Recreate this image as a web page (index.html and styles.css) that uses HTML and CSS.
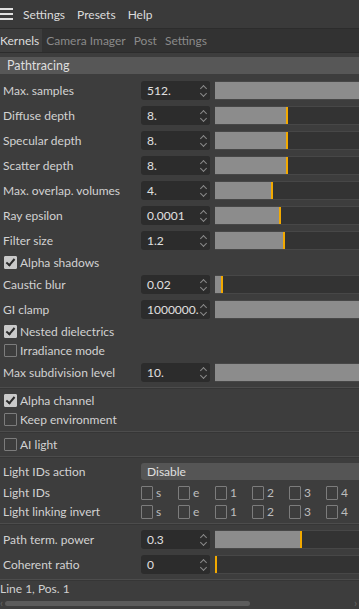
FILE: index.html
```html
<!DOCTYPE html>
<html lang="en">
<head>
    <meta charset="UTF-8">
    <meta name="viewport" content="width=device-width, initial-scale=1.0">
    <title>Render Settings</title>
    <link rel="stylesheet" href="styles.css">
</head>
<body>

    <div class="menubar">
        <span class="burger"><i></i><i></i><i></i></span>
        <span class="menu-item">Settings</span>
        <span class="menu-item">Presets</span>
        <span class="menu-item">Help</span>
    </div>

    <div class="tabs">
        <span class="tab active">Kernels</span>
        <span class="tab">Camera Imager</span>
        <span class="tab">Post</span>
        <span class="tab">Settings</span>
    </div>

    <div class="section-head">Pathtracing</div>

    <div class="panel">
        <div class="row slider-row">
            <span class="label">Max. samples</span>
            <span class="field">512.<span class="spin"></span></span>
            <span class="slider"><span class="fill full" style="width: 100%"></span></span>
        </div>
        <div class="row slider-row">
            <span class="label">Diffuse depth</span>
            <span class="field">8.<span class="spin"></span></span>
            <span class="slider"><span class="fill" style="width: 71px"></span></span>
        </div>
        <div class="row slider-row">
            <span class="label">Specular depth</span>
            <span class="field">8.<span class="spin"></span></span>
            <span class="slider"><span class="fill" style="width: 71px"></span></span>
        </div>
        <div class="row slider-row">
            <span class="label">Scatter depth</span>
            <span class="field">8.<span class="spin"></span></span>
            <span class="slider"><span class="fill" style="width: 71px"></span></span>
        </div>
        <div class="row slider-row">
            <span class="label">Max. overlap. volumes</span>
            <span class="field">4.<span class="spin"></span></span>
            <span class="slider"><span class="fill" style="width: 56px"></span></span>
        </div>
        <div class="row slider-row">
            <span class="label">Ray epsilon</span>
            <span class="field">0.0001<span class="spin"></span></span>
            <span class="slider"><span class="fill" style="width: 64px"></span></span>
        </div>
        <div class="row slider-row">
            <span class="label">Filter size</span>
            <span class="field">1.2<span class="spin"></span></span>
            <span class="slider"><span class="fill" style="width: 68px"></span></span>
        </div>
        <div class="row check-row">
            <span class="box checked"></span><span class="check-label">Alpha shadows</span>
        </div>
        <div class="row slider-row">
            <span class="label">Caustic blur</span>
            <span class="field">0.02<span class="spin"></span></span>
            <span class="slider"><span class="fill" style="width: 6px"></span></span>
        </div>
        <div class="row slider-row">
            <span class="label">GI clamp</span>
            <span class="field">1000000.<span class="spin"></span></span>
            <span class="slider"><span class="fill full" style="width: 100%"></span></span>
        </div>
        <div class="row check-row">
            <span class="box checked"></span><span class="check-label">Nested dielectrics</span>
        </div>
        <div class="row check-row">
            <span class="box"></span><span class="check-label">Irradiance mode</span>
        </div>
        <div class="row slider-row">
            <span class="label">Max subdivision level</span>
            <span class="field">10.<span class="spin"></span></span>
            <span class="slider"><span class="fill full" style="width: 100%"></span></span>
        </div>

        <div class="sep"></div>

        <div class="row check-row">
            <span class="box checked"></span><span class="check-label">Alpha channel</span>
        </div>
        <div class="row check-row">
            <span class="box"></span><span class="check-label">Keep environment</span>
        </div>

        <div class="sep"></div>

        <div class="row check-row">
            <span class="box"></span><span class="check-label">AI light</span>
        </div>

        <div class="sep"></div>

        <div class="row drop-row">
            <span class="label">Light IDs action</span>
            <span class="dropdown">Disable</span>
        </div>
        <div class="row id-row">
            <span class="label">Light IDs</span>
            <span class="ids">
                <span class="id"><span class="box"></span>s</span>
                <span class="id"><span class="box"></span>e</span>
                <span class="id"><span class="box"></span>1</span>
                <span class="id"><span class="box"></span>2</span>
                <span class="id"><span class="box"></span>3</span>
                <span class="id"><span class="box"></span>4</span>
            </span>
        </div>
        <div class="row id-row">
            <span class="label">Light linking invert</span>
            <span class="ids">
                <span class="id"><span class="box"></span>s</span>
                <span class="id"><span class="box"></span>e</span>
                <span class="id"><span class="box"></span>1</span>
                <span class="id"><span class="box"></span>2</span>
                <span class="id"><span class="box"></span>3</span>
                <span class="id"><span class="box"></span>4</span>
            </span>
        </div>

        <div class="sep"></div>

        <div class="row slider-row">
            <span class="label">Path term. power</span>
            <span class="field">0.3<span class="spin"></span></span>
            <span class="slider"><span class="fill" style="width: 85px"></span></span>
        </div>
        <div class="row slider-row">
            <span class="label">Coherent ratio</span>
            <span class="field">0<span class="spin"></span></span>
            <span class="slider"><span class="fill" style="width: 0px"></span></span>
        </div>

        <div class="sep"></div>
    </div>

    <div class="status">Line 1, Pos. 1</div>
    <div class="hscroll">
        <span class="arrow">&lsaquo;</span>
        <span class="track"><span class="thumb"></span></span>
        <span class="arrow">&rsaquo;</span>
    </div>

</body>
</html>
```

FILE: styles.css
```css
body {
    margin: 0;
    width: 359px;
    height: 609px;
    overflow: hidden;
    background-color: #3d3d3d;
    color: #d2d2d2;
    font-family: Lato, "Noto Sans", sans-serif;
    font-size: 12px;
}

.menubar {
    height: 28px;
    display: flex;
    align-items: center;
    background-color: #3a3a3a;
    color: #dcdcdc;
    font-size: 12px;
}
.burger {
    width: 13px;
    display: flex;
    flex-direction: column;
    gap: 3px;
    margin-right: 10px;
}
.burger i {
    display: block;
    height: 2px;
    background: #e0e0e0;
}
.menu-item {
    margin-right: 12px;
}

.tabs {
    height: 23px;
    display: flex;
    align-items: stretch;
    background-color: #323232;
    border-top: 1px solid #2c2c2c;
    border-bottom: 1px solid #2c2c2c;
    font-size: 12px;
}
.tab {
    display: flex;
    align-items: center;
    padding: 0 4px;
    color: #8a8a8a;
}
.tab.active {
    padding-left: 0;
    padding-right: 3px;
    background-color: #3d3d3d;
    color: #dcdcdc;
}

.section-head {
    margin-top: 4px;
    height: 17px;
    line-height: 17px;
    padding-left: 7px;
    background-color: #575757;
    color: #dedede;
    font-size: 12.5px;
}

.panel {
    padding-top: 4px;
}

.row {
    display: flex;
    align-items: center;
    padding-left: 3px;
}
.slider-row {
    height: 25px;
}
.check-row {
    height: 19px;
    padding-left: 4px;
}
.label {
    width: 138px;
    flex-shrink: 0;
    white-space: nowrap;
}

.field {
    position: relative;
    width: 63px;
    height: 19px;
    line-height: 19px;
    padding-left: 6px;
    flex-shrink: 0;
    background-color: #2c2c2c;
    border-radius: 3px;
    color: #e0e0e0;
    overflow: hidden;
    white-space: nowrap;
}
.spin {
    position: absolute;
    right: 0;
    top: 0;
    width: 11px;
    height: 19px;
    background-color: #2c2c2c;
}
.spin::before,
.spin::after {
    content: "";
    position: absolute;
    left: 2px;
    width: 4px;
    height: 4px;
    border-left: 1px solid #8a8a8a;
    border-top: 1px solid #8a8a8a;
}
.spin::before {
    top: 5px;
    transform: rotate(45deg);
}
.spin::after {
    top: 10px;
    transform: rotate(225deg);
}

.slider {
    flex: 1;
    height: 17px;
    margin-left: 5px;
    background-color: #333333;
    border-top: 1px solid #474747;
    border-bottom: 1px solid #474747;
    display: flex;
}
.fill {
    height: 100%;
    background-color: #8c8c8c;
    border-right: 2px solid #f2a900;
}
.fill.full {
    border-right: none;
}

.box {
    width: 13px;
    height: 13px;
    flex-shrink: 0;
    border: 1px solid #7c7c7c;
    border-radius: 1px;
    margin-right: 3px;
    box-sizing: border-box;
    position: relative;
}
.box.checked {
    background-color: #c9c9c9;
    border-color: #c9c9c9;
}
.box.checked::after {
    content: "";
    position: absolute;
    left: 3px;
    top: 0px;
    width: 3px;
    height: 7px;
    border-right: 2px solid #2a2a2a;
    border-bottom: 2px solid #2a2a2a;
    transform: rotate(40deg);
}
.check-label {
    white-space: nowrap;
}

.sep {
    height: 1px;
    margin: 2px 0;
    background-color: #4c4c4c;
    border-bottom: 1px solid #363636;
}

.drop-row {
    height: 23px;
}
.dropdown {
    flex: 1;
    height: 17px;
    line-height: 17px;
    padding-left: 6px;
    background-color: #555555;
    border-radius: 3px 0 0 3px;
    color: #e0e0e0;
}

.id-row {
    height: 19px;
}
.ids {
    display: flex;
}
.id {
    width: 37px;
    display: flex;
    align-items: center;
    color: #bdbdbd;
}
.id .box {
    height: 14px;
    width: 12px;
    margin-right: 3px;
}

.status {
    height: 12px;
    line-height: 12px;
    color: #d0d0d0;
}
.hscroll {
    display: flex;
    align-items: center;
    height: 16px;
    color: #666;
}
.arrow {
    width: 5px;
    font-size: 11px;
    line-height: 12px;
}
.track {
    flex: 1;
    height: 5px;
}
.thumb {
    display: block;
    width: 245px;
    height: 5px;
    border-radius: 3px;
    background-color: #5c5c5c;
}
```
